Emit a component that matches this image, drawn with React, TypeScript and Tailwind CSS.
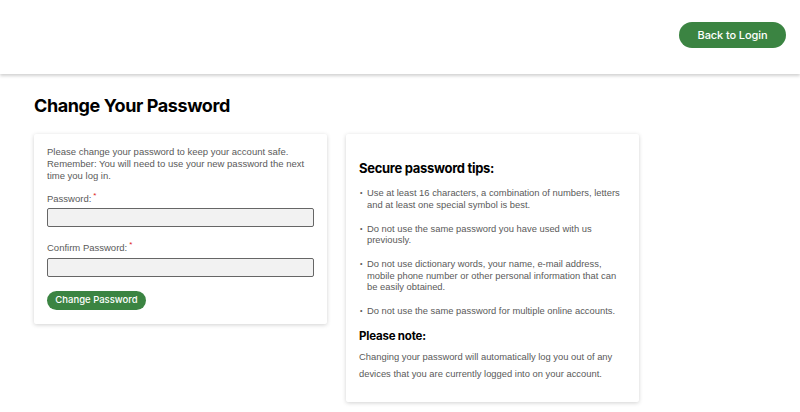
export default function App() {
  const tips = [
    "Use at least 16 characters, a combination of numbers, letters and at least one special symbol is best.",
    "Do not use the same password you have used with us previously.",
    "Do not use dictionary words, your name, e-mail address, mobile phone number or other personal information that can be easily obtained.",
    "Do not use the same password for multiple online accounts.",
  ];

  return (
    <div className="min-h-[412px] bg-white font-['Liberation_Sans',Arial,sans-serif]">
      <header className="h-[74px] flex items-center justify-end pr-[14px] pb-[4px] shadow-[0_2px_3px_rgba(0,0,0,0.18)]">
        <button className="h-[26px] w-[107px] rounded-full bg-[#3b8442] text-white text-[11px] font-['Inter',sans-serif] font-medium tracking-[-0.1px]">
          Back to Login
        </button>
      </header>

      <main className="px-[34px] pt-[20px]">
        <h1 className="text-[18px] font-['Inter',sans-serif] font-bold text-black leading-[24px] tracking-[-0.4px]">
          Change Your Password
        </h1>

        <div className="mt-[16px] flex items-start gap-[19px]">
          <div className="w-[293px] bg-white shadow-[0_1px_4px_rgba(0,0,0,0.18)] rounded-[2px] px-[13px] pt-[12px] pb-[14px]">
            <p className="text-[9.5px] leading-[12px] text-[#5a5a5a]">
              Please change your password to keep your account safe. Remember: You will need to use your new password the next time you log in.
            </p>

            <label className="block mt-[11px] text-[9.5px] text-[#5a5a5a] leading-[12px]">
              Password:<sup className="text-[#d22] ml-[2px] text-[8px]">*</sup>
            </label>
            <input
              type="password"
              className="mt-[3px] block w-full h-[19px] bg-[#f2f2f2] border border-[#666] rounded-[2px]"
            />

            <label className="block mt-[15px] text-[9.5px] text-[#5a5a5a] leading-[12px]">
              Confirm Password:<sup className="text-[#d22] ml-[2px] text-[8px]">*</sup>
            </label>
            <input
              type="password"
              className="mt-[4px] block w-full h-[19px] bg-[#f2f2f2] border border-[#666] rounded-[2px]"
            />

            <button className="mt-[14px] h-[19px] w-[99px] rounded-full bg-[#3b8442] text-white text-[9.5px] font-['Inter',sans-serif] font-medium">
              Change Password
            </button>
          </div>

          <div className="w-[293px] bg-white shadow-[0_1px_4px_rgba(0,0,0,0.18)] rounded-[2px] px-[13px] pt-[26px] pb-[20px]">
            <h2 className="text-[13px] font-['Inter',sans-serif] font-bold text-black leading-[16px] tracking-[-0.3px]">
              Secure password tips:
            </h2>
            <ul className="mt-[11px] flex flex-col gap-[12.5px]">
              {tips.map((t) => (
                <li key={t} className="flex text-[9.4px] leading-[11.5px] text-[#5a5a5a]">
                  <span className="w-[8px] shrink-0 pl-[1px] text-[7px]">•</span>
                  <span>{t}</span>
                </li>
              ))}
            </ul>
            <h3 className="mt-[12px] text-[11.5px] font-['Inter',sans-serif] font-bold text-black leading-[14px] tracking-[-0.2px]">
              Please note:
            </h3>
            <p className="mt-[5px] text-[9.4px] leading-[17px] text-[#5a5a5a]">
              Changing your password will automatically log you out of any devices that you are currently logged into on your account.
            </p>
          </div>
        </div>
      </main>
    </div>
  );
}
